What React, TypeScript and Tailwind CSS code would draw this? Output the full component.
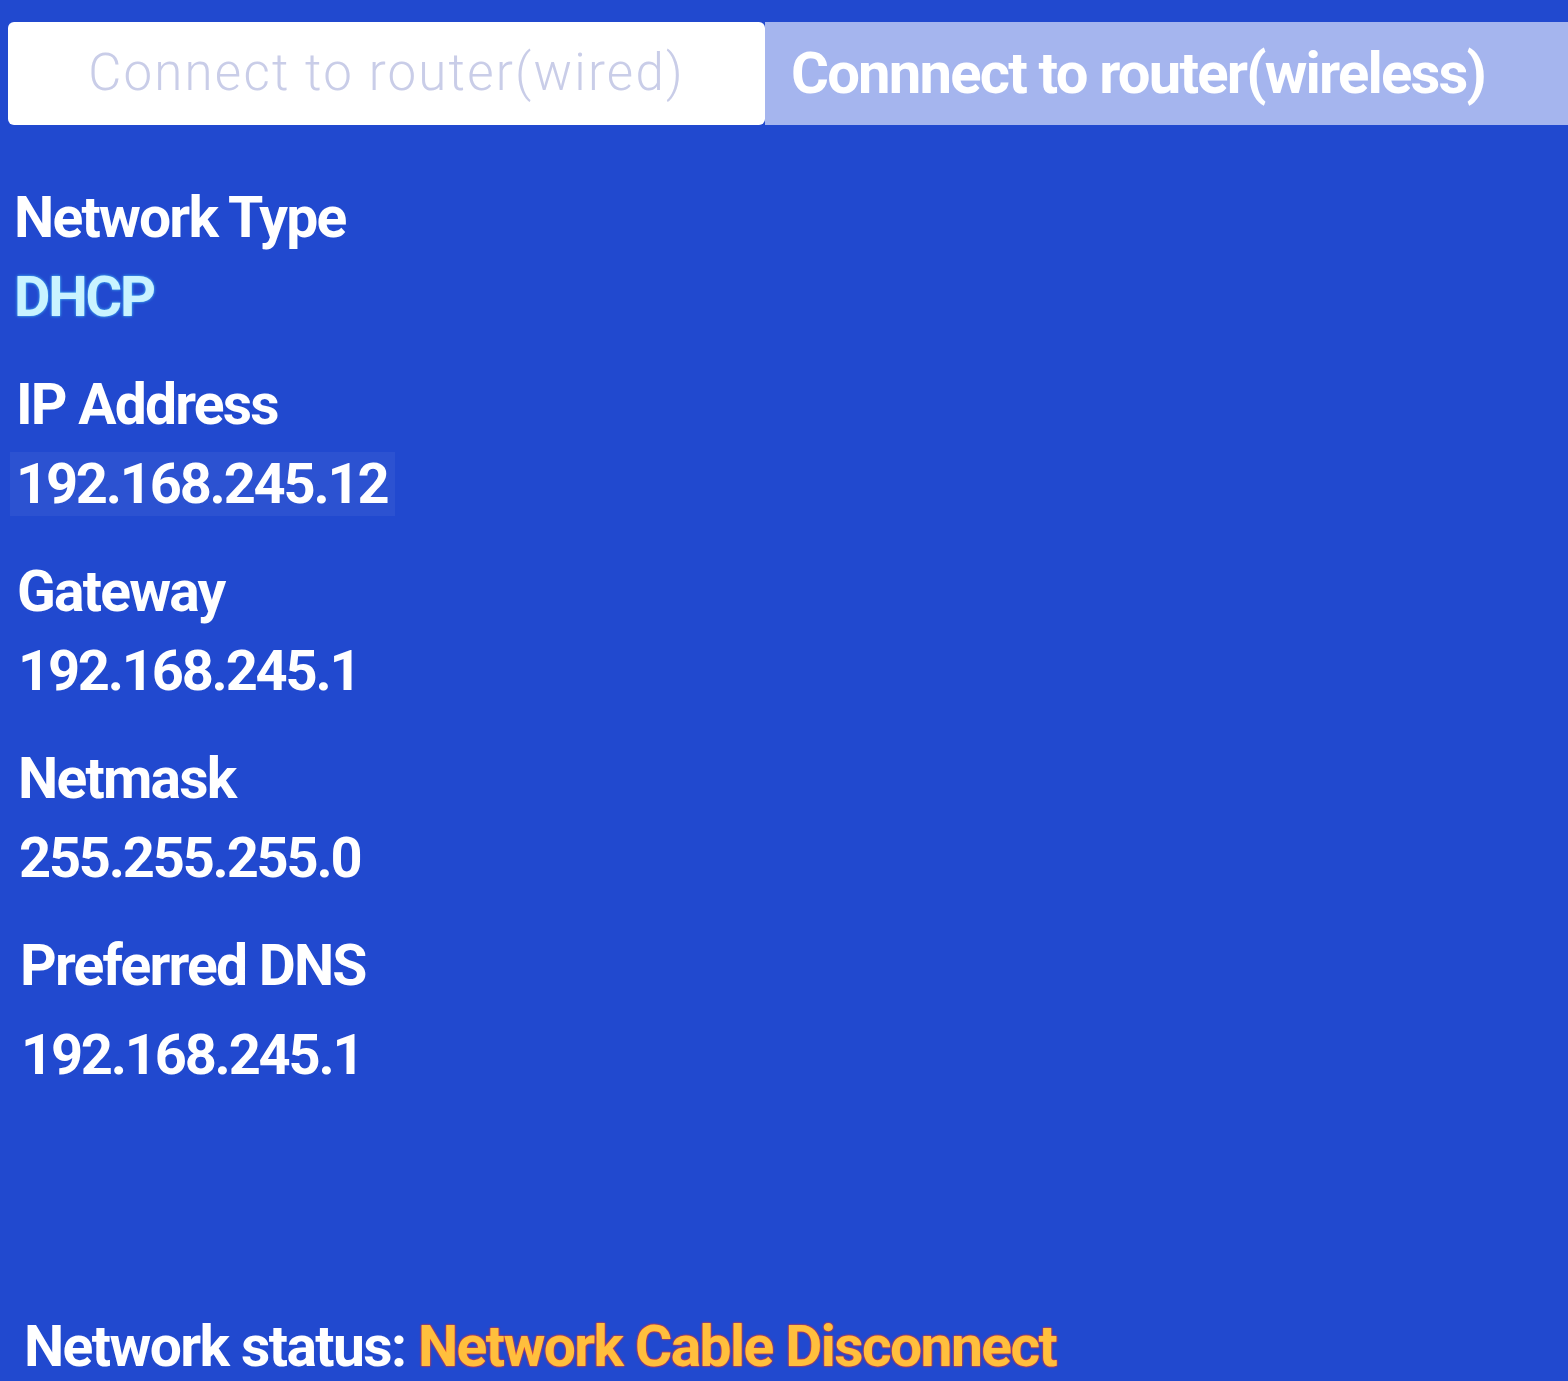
export default function App() {
  const rows = [
    { label: "Network Type", value: "DHCP", accent: true, shift: "pl-[0px]", gap: "mt-[12px]" },
    { label: "IP Address", value: "192.168.245.12", focused: true, shift: "pl-[2px]", gap: "mt-[12px]" },
    { label: "Gateway", value: "192.168.245.1", shift: "pl-[3px]", gap: "mt-[12px]" },
    { label: "Netmask", value: "255.255.255.0", shift: "pl-[4px]", gap: "mt-[12px]" },
    { label: "Preferred DNS", value: "192.168.245.1", shift: "pl-[6px]", gap: "mt-[22px]" },
  ];

  return (
    <div
      className="flex h-[1381px] w-[1568px] flex-col overflow-hidden bg-[#2149cf] text-white"
      style={{ fontFamily: "Roboto, 'Liberation Sans', sans-serif" }}
    >
      <div className="mt-[22px] flex h-[103px] pl-[8px]">
        <div className="flex w-[757px] items-center justify-center rounded-[6px] bg-white">
          <span className="text-[51px] font-light tracking-[2.2px] text-[#c9cde8]">Connect to router(wired)</span>
        </div>
        <div className="flex flex-1 items-center bg-[#a5b5ee] pl-[26px]">
          <span className="text-[58px] font-bold tracking-[-1.8px] text-white">Connnect to router(wireless)</span>
        </div>
      </div>

      <div className="mt-[58px] flex flex-col pl-[14px]">
        {rows.map((r) => (
          <div key={r.label} className={"flex h-[187px] flex-col " + r.shift}>
            <div className="h-[70px] text-[57px] font-bold leading-[70px] tracking-[-1.8px]">{r.label}</div>
            <div className={"flex " + r.gap}>
              <span
                className={
                  "h-[64px] px-[1px] text-[56px] font-bold leading-[64px] tracking-[-2.2px] " +
                  (r.accent ? "-ml-[1px] text-[#c9f3ff] " : "") +
                  (r.focused ? "-ml-[6px] bg-white/5 pl-[6px] pr-[8px] " : "")
                }
                style={r.accent ? { textShadow: "0 0 3px #4fd0ff" } : undefined}
              >
                {r.value}
              </span>
            </div>
          </div>
        ))}
      </div>

      <div className="mt-auto mb-[2px] pl-[24px] text-[57px] font-bold leading-[64px] tracking-[-1.6px]">
        <span>Network status: </span>
        <span className="text-[#ffbf3d]" style={{ textShadow: "0 0 2px #ff3a1a, 0 0 2px #ff3a1a" }}>
          Network Cable Disconnect
        </span>
      </div>
    </div>
  );
}
